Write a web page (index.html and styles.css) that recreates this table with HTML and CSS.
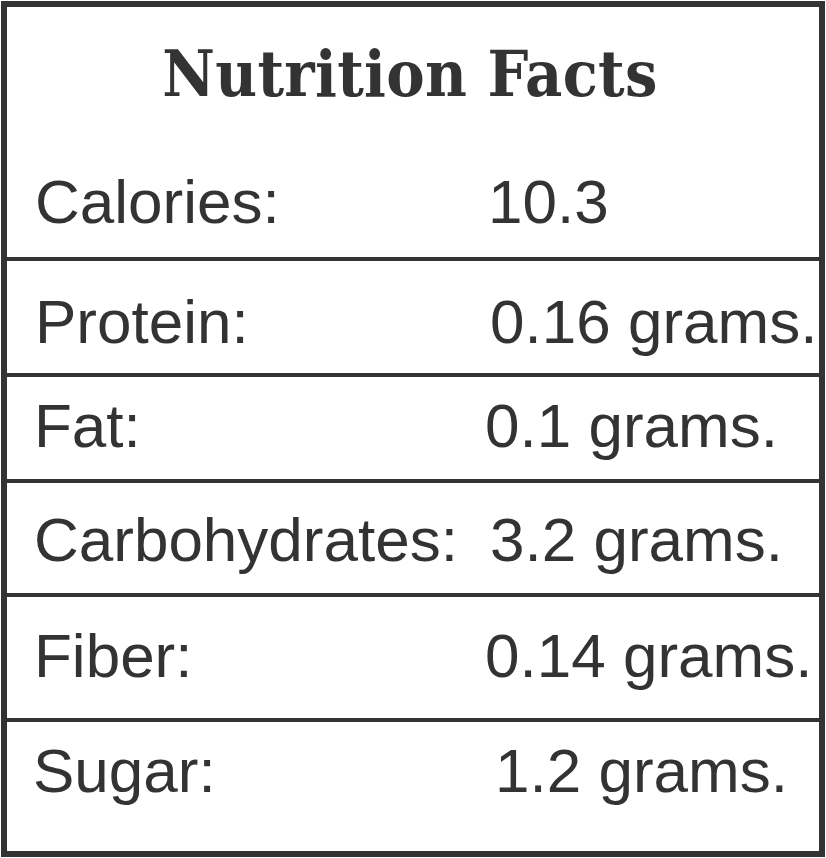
FILE: index.html
```html
<!DOCTYPE html>
<html lang="en">
<head>
<meta charset="utf-8">
<title>Nutrition Facts</title>
<link rel="stylesheet" href="styles.css">
</head>
<body>
<div class="card">
  <section class="head">
    <h1 class="title">Nutrition Facts</h1>
    <div class="row row-cal">
      <span class="label shift-1">Calories:</span>
      <span class="value shift-1">10.3</span>
    </div>
  </section>
  <div class="row row-pro">
    <span class="label shift-1">Protein:</span>
    <span class="value shift-3">0.16 grams.</span>
  </div>
  <div class="row row-fat">
    <span class="label">Fat:</span>
    <span class="value shift-n2">0.1 grams.</span>
  </div>
  <div class="row row-carb">
    <span class="label">Carbohydrates:</span>
    <span class="value shift-3">3.2 grams.</span>
  </div>
  <div class="row row-fib">
    <span class="label">Fiber:</span>
    <span class="value shift-n2">0.14 grams.</span>
  </div>
  <div class="row row-sug">
    <span class="label shift-n1">Sugar:</span>
    <span class="value shift-8">1.2 grams.</span>
  </div>
</div>
</body>
</html>
```

FILE: styles.css
```css
html, body {
  margin: 0;
  padding: 0;
  background: #ffffff;
}

body {
  padding: 1px 0 0 1px;
}

.card {
  box-sizing: border-box;
  width: 824px;
  height: 856px;
  border: 6px solid #333333;
  background: #ffffff;
  color: #333333;
  display: flex;
  flex-direction: column;
}

.head {
  box-sizing: border-box;
  height: 254px;
  padding-top: 35px;
  border-bottom: 4px solid #333333;
}

.title {
  margin: 0;
  font-family: "DejaVu Serif Condensed", "DejaVu Serif", serif;
  font-stretch: condensed;
  font-weight: bold;
  font-size: 64px;
  line-height: 64px;
  text-align: center;
  letter-spacing: 0.3px;
  padding-right: 6px;
}

.row {
  display: grid;
  grid-template-columns: 453px 1fr;
  padding-left: 27px;
  font-family: "Liberation Sans", Arial, sans-serif;
  font-size: 62px;
  line-height: 62px;
  white-space: nowrap;
}

.row-cal { padding-top: 65px; }

.row-pro,
.row-fat,
.row-carb,
.row-fib {
  box-sizing: border-box;
  border-bottom: 4px solid #333333;
}

.row-pro { padding-top: 30px; height: 116px; }
.row-fat { padding-top: 18px; height: 106px; }
.row-carb { padding-top: 26px; height: 114px; }
.row-fib { padding-top: 28px; height: 125px; }
.row-sug { padding-top: 18px; flex: 1; }

.shift-1 { margin-left: 1px; }
.shift-3 { margin-left: 3px; }
.shift-8 { margin-left: 8px; }
.shift-n1 { margin-left: -1px; }
.shift-n2 { margin-left: -2px; }
```
